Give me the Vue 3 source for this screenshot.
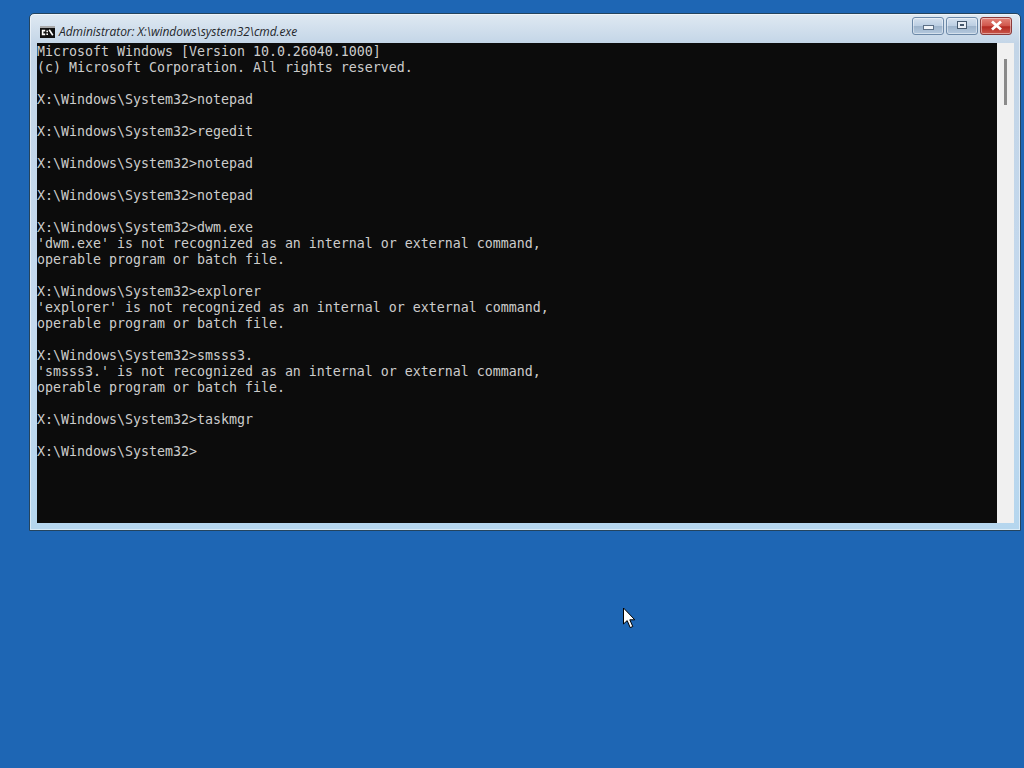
<script setup>
const text = `Microsoft Windows [Version 10.0.26040.1000]
(c) Microsoft Corporation. All rights reserved.

X:\\Windows\\System32>notepad

X:\\Windows\\System32>regedit

X:\\Windows\\System32>notepad

X:\\Windows\\System32>notepad

X:\\Windows\\System32>dwm.exe
'dwm.exe' is not recognized as an internal or external command,
operable program or batch file.

X:\\Windows\\System32>explorer
'explorer' is not recognized as an internal or external command,
operable program or batch file.

X:\\Windows\\System32>smsss3.
'smsss3.' is not recognized as an internal or external command,
operable program or batch file.

X:\\Windows\\System32>taskmgr

X:\\Windows\\System32>`
</script>

<template>
  <div class="desktop">
    <section class="window">
      <header class="titlebar">
        <svg class="appicon" width="15" height="12" viewBox="0 0 15 12">
          <rect x="0" y="0" width="15" height="12" fill="#111" />
          <rect x="0" y="0" width="15" height="2" fill="#a8a8a8" />
          <path d="M5.2 4.6 H2.6 V8.4 H5.2" fill="none" stroke="#fff" stroke-width="1.6" />
          <rect x="6.4" y="4.6" width="1.6" height="1.6" fill="#fff" />
          <rect x="6.4" y="7.4" width="1.6" height="1.6" fill="#fff" />
          <path d="M9.2 3.8 L12.8 9.2" stroke="#fff" stroke-width="1.6" />
        </svg>
        <span class="title">Administrator: X:\windows\system32\cmd.exe</span>
        <div class="controls">
          <button class="ctl">
            <span class="min-glyph"></span>
          </button>
          <button class="ctl">
            <span class="max-glyph"></span>
          </button>
          <button class="ctl close">
            <svg width="13" height="11" viewBox="0 0 13 11">
              <path d="M2 1.5 L11 9.5 M11 1.5 L2 9.5" stroke="#fff" stroke-width="2.8" />
            </svg>
          </button>
        </div>
      </header>
      <div class="body">
        <pre class="console">{{ text }}</pre>
        <div class="scrollbar"><div class="thumb"></div></div>
      </div>
    </section>
    <svg class="cursor" width="15" height="23" viewBox="0 0 15 23">
      <path d="M1.5 1 L1.5 17 L5.2 13.6 L8.2 20.6 L10.8 19.5 L7.8 12.8 L12.8 12.8 Z" fill="#fff" stroke="#000" stroke-width="1" />
    </svg>
  </div>
</template>

<style>
html, body { margin: 0; background: #1e66b4; }
</style>

<style scoped>
.desktop {
  position: relative;
  width: 1024px;
  height: 768px;
  background: #1e66b4;
  overflow: hidden;
  padding: 13px 3px 0 29px;
  box-sizing: border-box;
}
.window {
  width: 992px;
  height: 518px;
  box-sizing: border-box;
  border: 1px solid #24445e;
  border-radius: 5px 5px 0 0;
  background: linear-gradient(180deg, #dfe9f2 0, #c3d5e7 30px, #c4d9ee 60%, #b5d6ee 100%);
  box-shadow: inset 0 0 0 1px rgba(255, 255, 255, 0.5);
  padding: 0 6px 6px 7px;
  display: flex;
  flex-direction: column;
}
.titlebar {
  height: 29px;
  display: flex;
  align-items: center;
  padding: 6px 0 0 3px;
  box-sizing: border-box;
  flex: none;
}
.appicon { flex: none; }
.title {
  margin-left: 4px;
  font: italic 12px "Open Sans", "Noto Sans", sans-serif;
  letter-spacing: -0.05px;
  color: #24272b;
  white-space: nowrap;
}
.controls {
  margin-left: auto;
  margin-right: 2px;
  margin-top: -12px;
  display: flex;
  gap: 2px;
  flex: none;
}
.ctl {
  width: 32px;
  height: 18px;
  padding: 0;
  box-sizing: border-box;
  border: 1px solid #6c89a8;
  border-radius: 3px;
  background: linear-gradient(180deg, #d5e1ee 0, #bccfe3 48%, #9eb4cb 52%, #b4c9de 100%);
  box-shadow: inset 0 0 0 1px rgba(255,255,255,0.45);
  display: flex;
  align-items: center;
  justify-content: center;
}
.close {
  border-color: #8a3a3a;
  background: linear-gradient(180deg, #e4857a 0, #d0574d 48%, #b42a22 55%, #c9574a 100%);
}
.min-glyph {
  display: block;
  width: 9px;
  height: 3px;
  margin-top: 4px;
  background: #f0f4f8;
  border: 1px solid #5c6f85;
}
.max-glyph {
  display: block;
  width: 8px;
  height: 6px;
  background: #e8eef5;
  border: 1px solid #44576c;
  position: relative;
  top: -1px;
}
.max-glyph::after {
  content: "";
  display: block;
  width: 4px;
  height: 2px;
  margin: 2px auto 0;
  background: #44576c;
}
.body {
  display: flex;
  height: 480px;
  flex: none;
}
.console {
  width: 960px;
  height: 480px;
  margin: 0;
  padding-top: 1px;
  box-sizing: border-box;
  flex: none;
  background: #0c0c0c;
  color: #cccccc;
  font-family: "DejaVu Sans Mono", "Liberation Mono", monospace;
  font-size: 13.29px;
  line-height: 16px;
  overflow: hidden;
}
.scrollbar {
  width: 17px;
  background: #f0f0f0;
  flex: none;
  position: relative;
}
.thumb {
  position: absolute;
  left: 7px;
  top: 16px;
  width: 3px;
  height: 46px;
  background: #8a8a8a;
}
.cursor {
  position: absolute;
  left: 622px;
  top: 607px;
}
</style>
